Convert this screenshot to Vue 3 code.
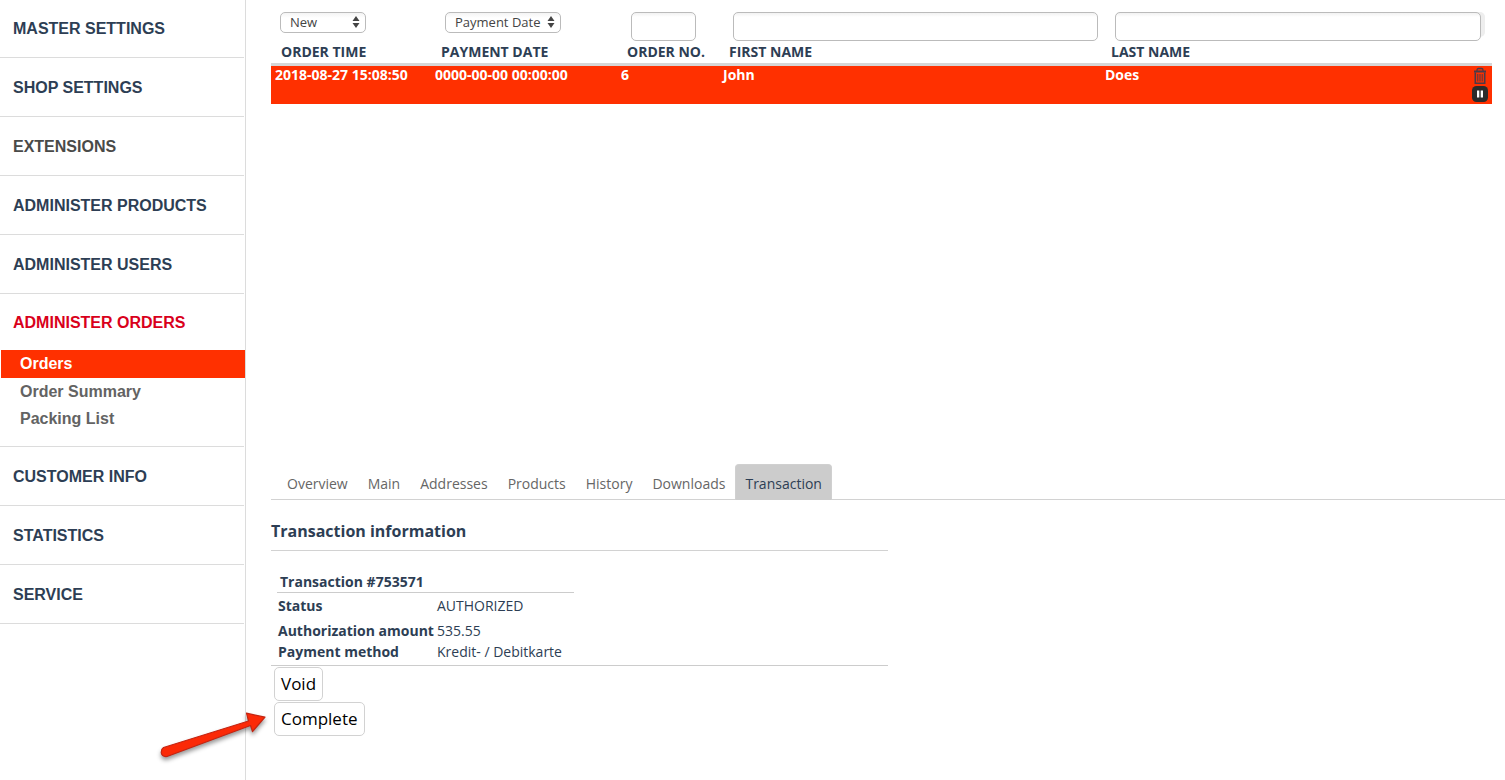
<script setup>
import { ref } from 'vue'

const menu = [
  { label: 'MASTER SETTINGS' },
  { label: 'SHOP SETTINGS' },
  { label: 'EXTENSIONS', tone: 'muted' },
  { label: 'ADMINISTER PRODUCTS' },
  { label: 'ADMINISTER USERS' },
  { label: 'ADMINISTER ORDERS', tone: 'open', children: ['Orders', 'Order Summary', 'Packing List'] },
  { label: 'CUSTOMER INFO' },
  { label: 'STATISTICS' },
  { label: 'SERVICE' },
]
const activePage = ref('Orders')

const tabs = ['Overview', 'Main', 'Addresses', 'Products', 'History', 'Downloads', 'Transaction']
const activeTab = ref('Transaction')

const orders = [
  { time: '2018-08-27 15:08:50', paid: '0000-00-00 00:00:00', no: 6, first: 'John', last: 'Does' },
]
const status = ref('New')
const dateField = ref('Payment Date')
const orderNo = ref('')
const firstName = ref('')
const lastName = ref('')
</script>

<template>
  <div class="layout">
    <nav class="sidebar">
      <ul class="menu">
        <li v-for="item in menu" :key="item.label" class="menu-item">
          <a href="#" class="menu-link" :class="item.tone">{{ item.label }}</a>
          <ul v-if="item.children" class="submenu">
            <li v-for="child in item.children" :key="child">
              <a href="#" class="sub-link" :class="{ active: child === activePage }" @click.prevent="activePage = child">{{ child }}</a>
            </li>
          </ul>
        </li>
      </ul>
    </nav>

    <main class="content">
      <section class="list">
        <table class="orders">
          <thead>
            <tr class="filters">
              <td>
                <span class="select-wrap">
                  <select v-model="status" class="select status" aria-label="Order status">
                    <option>New</option>
                    <option>Finished</option>
                    <option>Problems</option>
                  </select>
                  <svg class="caret" viewBox="0 0 8 12" aria-hidden="true"><path d="M4 0 7.5 5h-7zM4 12 .5 7h7z" /></svg>
                </span>
              </td>
              <td>
                <span class="select-wrap shifted">
                  <select v-model="dateField" class="select date" aria-label="Date field">
                    <option>Payment Date</option>
                    <option>Order Date</option>
                  </select>
                  <svg class="caret" viewBox="0 0 8 12" aria-hidden="true"><path d="M4 0 7.5 5h-7zM4 12 .5 7h7z" /></svg>
                </span>
              </td>
              <td class="boxed"><input v-model="orderNo" class="box short" type="text" aria-label="Order no." /></td>
              <td class="boxed"><input v-model="firstName" class="box" type="text" aria-label="First name" /></td>
              <td class="boxed last"><span class="shade"><input v-model="lastName" class="box" type="text" aria-label="Last name" /></span></td>
            </tr>
            <tr class="titles">
              <th scope="col">ORDER TIME</th>
              <th scope="col">PAYMENT DATE</th>
              <th scope="col">ORDER NO.</th>
              <th scope="col">FIRST NAME</th>
              <th scope="col">LAST NAME</th>
            </tr>
          </thead>
          <tbody>
            <tr v-for="order in orders" :key="order.no" class="order">
              <td>{{ order.time }}</td>
              <td>{{ order.paid }}</td>
              <td>{{ order.no }}</td>
              <td>{{ order.first }}</td>
              <td class="with-actions">
                {{ order.last }}
                <span class="actions">
                  <button type="button" class="icon-btn" aria-label="Delete">
                    <svg width="16" height="18" viewBox="0 0 16 18">
                      <g fill="none" stroke="#4a3a48">
                        <path d="M2 4.5h12" stroke-width="2" />
                        <path d="M5 4V3q0-1.500 1.500-1.500h3Q11 1.500 11 3v1" stroke-width="1.3" />
                        <path d="M3.300 5.500v10.700h9.400V5.500" stroke-width="1.6" />
                        <path d="M5.800 7v7.500M8 7v7.500M10.200 7v7.500" stroke-width="1" />
                      </g>
                    </svg>
                  </button>
                  <button type="button" class="icon-btn" aria-label="Pause">
                    <svg width="16" height="18" viewBox="0 0 16 18">
                      <rect x="0" y="1" width="16" height="16" rx="4.5" fill="#2b2b2b" />
                      <path d="M5 5.500h2.300v7H5zM8.700 5.500H11v7H8.700z" fill="#fff" />
                    </svg>
                  </button>
                </span>
              </td>
            </tr>
          </tbody>
        </table>
      </section>

      <section class="detail">
        <div class="tabs" role="tablist">
          <button v-for="tab in tabs" :key="tab" type="button" role="tab" class="tab" :class="{ active: tab === activeTab }" :aria-selected="tab === activeTab" @click="activeTab = tab">{{ tab }}</button>
        </div>

        <div class="panel">
          <h2>Transaction information</h2>
          <table class="info">
            <thead>
              <tr><th colspan="2">Transaction #753571</th></tr>
            </thead>
            <tbody>
              <tr class="tall"><th scope="row">Status</th><td>AUTHORIZED</td></tr>
              <tr><th scope="row">Authorization amount</th><td>535.55</td></tr>
              <tr><th scope="row">Payment method</th><td>Kredit- / Debitkarte</td></tr>
            </tbody>
          </table>
        </div>
        <div class="buttons">
          <button type="button" class="btn">Void</button>
          <div class="pointed">
            <button type="button" class="btn">Complete</button>
            <svg class="arrow" width="130" height="70" viewBox="0 0 130 70" aria-hidden="true">
              <path d="M13.500 47.500 98.500 21 96.500 13.200 115 17.200 102.500 31.500 100.500 25.500 17 56.500Q12 57 11.300 53 11 49 13.500 47.500z" fill="#fb2a07" stroke="#c42512" stroke-width="1.200" stroke-linejoin="round" />
            </svg>
          </div>
        </div>
      </section>
    </main>
  </div>
</template>

<style>
body {
  margin: 0;
  background: #fff;
}
</style>

<style scoped>
.layout {
  display: flex;
  min-height: 100vh;
  color: #2d3e54;
  font: 14px/20px 'Trebuchet MS', 'Open Sans', sans-serif;
}
.layout * {
  box-sizing: border-box;
}
ul {
  list-style: none;
  margin: 0;
  padding: 0;
}
a {
  text-decoration: none;
}
button,
input,
select {
  font: inherit;
}

.sidebar {
  flex: 0 0 246px;
  border-right: 1px solid #dcdcdc;
  font: bold 16px/20px 'Liberation Sans', Arial, sans-serif;
}
.menu {
  margin-top: -1px;
}
.menu-item {
  margin-right: 1px;
  border-bottom: 1px solid #dcdcdc;
}
.menu-link {
  display: block;
  padding: 20px 13px 18px;
  color: #2d3e54;
}
.menu-link.muted {
  color: #4a4a48;
}
.menu-link.open {
  padding: 19px 13px 17px;
  color: #d9001b;
}
.submenu {
  margin-right: -1px;
  padding: 0 0 14px 1px;
}
.sub-link {
  display: block;
  padding: 4px 19px;
  color: #636363;
}
.sub-link.active {
  background: #ff3000;
  color: #fff;
}
.submenu li + li .sub-link {
  padding-bottom: 3px;
}

.content {
  flex: 1;
  min-width: 0;
  display: flex;
  flex-direction: column;
  padding-left: 25px;
}
.list {
  flex: 1;
  padding: 12px 13px 12px 0;
}
.orders,
.orders thead,
.orders tbody {
  display: block;
}
.orders tr {
  display: grid;
  grid-template-columns: 160px 186px 102px 382fr 391fr;
}
.orders td,
.orders th {
  padding: 0;
  text-align: left;
}
.orders .filters td {
  padding-left: 9px;
}
.orders .filters .boxed {
  padding: 0 3px 0 14px;
}
.orders .filters .last {
  padding-right: 7px;
}
.select-wrap {
  position: relative;
  display: inline-block;
}
.shifted {
  margin-left: 5px;
}
.select {
  display: block;
  appearance: none;
  height: 21px;
  padding: 0 9px;
  border: 1px solid #bbb;
  border-radius: 5px;
  background: linear-gradient(#f4f4f4, #fff 5px);
  color: #444;
  font-size: 13px;
  line-height: 19px;
}
.status {
  width: 86px;
}
.date {
  width: 116px;
}
.caret {
  position: absolute;
  top: 4px;
  right: 6px;
  width: 8px;
  height: 12px;
  fill: #444;
  pointer-events: none;
}
.box {
  display: block;
  width: 100%;
  height: 29px;
  padding: 0 8px;
  border: 1px solid #bbb;
  border-radius: 5px;
  background: linear-gradient(#f2f2f2, #fff 4px);
}
.short {
  width: 65px;
}
.shade {
  display: block;
  height: 25px;
  padding-right: 4px;
  border-radius: 5px;
  background: #eee;
}
.titles {
  border-bottom: 3px solid #d6d6d6;
}
.orders .titles th {
  padding: 1px 0 1px 10px;
  white-space: nowrap;
}
.order {
  background: #ff3000;
  color: #fff;
  font-weight: bold;
  line-height: 17px;
}
.orders .order td {
  padding-left: 4px;
}
.orders .order .with-actions {
  display: flex;
  justify-content: space-between;
  padding: 0 4px 0 4px;
}
.actions {
  display: flex;
  flex-direction: column;
  padding: 1px 0;
}
.icon-btn {
  display: block;
  height: 18px;
  padding: 0;
  border: 0;
  background: none;
  line-height: 0;
}

.detail {
  padding-bottom: 44px;
}
.tabs {
  display: flex;
  padding-left: 6px;
  border-bottom: 1px solid #d2d2d2;
}
.tab {
  height: 36px;
  margin-bottom: -1px;
  padding: 3px 9px 0;
  border: 1px solid transparent;
  border-width: 1px 1px 0;
  border-radius: 4px 4px 0 0;
  background: none;
  color: #666;
}
.tab.active {
  border-color: #d0d0d0;
  background: #ccc;
  color: #2d3e54;
}
.panel {
  width: 50%;
  border-bottom: 1px solid #ccc;
}
h2 {
  margin: 0;
  padding: 20px 0 8px;
  border-bottom: 1px solid #d2d2d2;
  font-size: 16px;
  line-height: 22px;
}
.info {
  margin: 19px 0 3px 6px;
  border-collapse: collapse;
}
.info th,
.info td {
  padding: 0 1px;
  text-align: left;
  line-height: 21px;
  white-space: nowrap;
}
.info tbody th {
  width: 159px;
}
.info td {
  min-width: 138px;
}
.info thead th {
  padding: 1px 3px 0;
  border-bottom: 1px solid #ccc;
}
.info .tall th,
.info .tall td {
  padding-top: 2px;
  padding-bottom: 4px;
}
.buttons {
  display: flex;
  flex-direction: column;
  align-items: flex-start;
  gap: 1px;
  padding: 1px 0 0 3px;
}
.btn {
  display: block;
  height: 34px;
  padding: 0 6px;
  border: 1px solid #d2d2d2;
  border-radius: 5px;
  background: #fff;
  color: #000;
  font-size: 17px;
}
.pointed {
  position: relative;
}
.arrow {
  position: absolute;
  right: 100%;
  top: -2px;
  margin-right: -6px;
  filter: drop-shadow(0 3px 2px rgba(0, 0, 0, 0.4));
  pointer-events: none;
}
</style>
